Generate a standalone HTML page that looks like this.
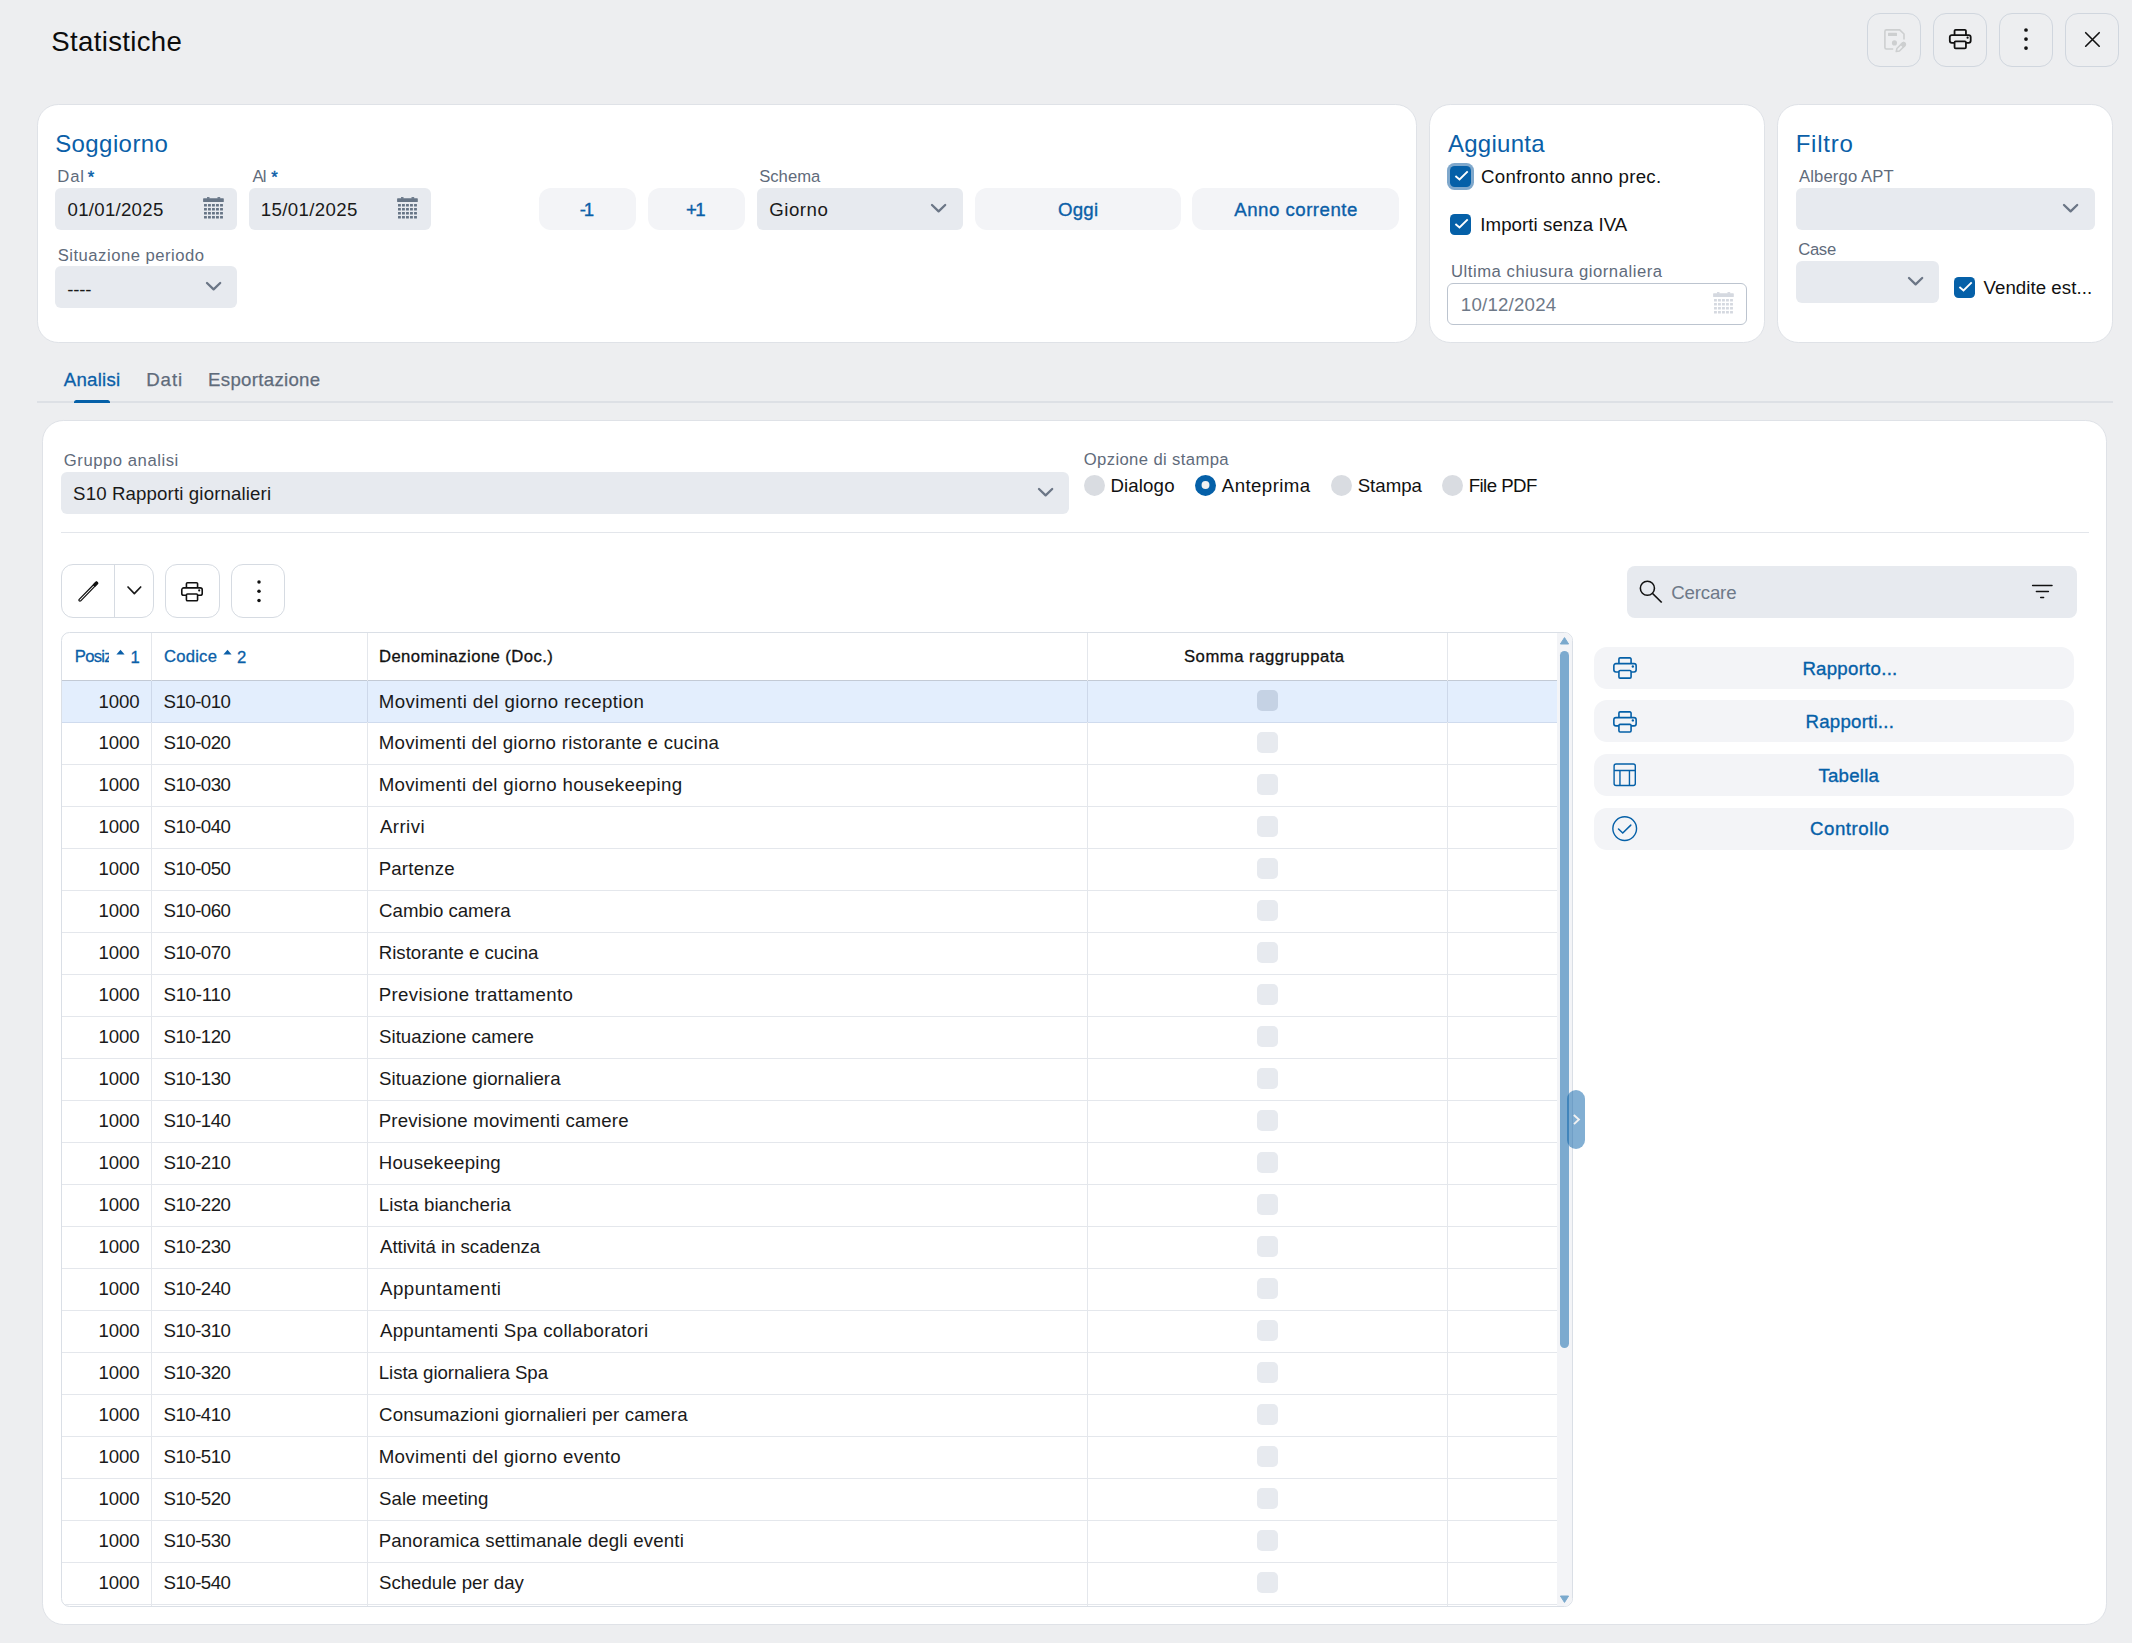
<!DOCTYPE html>
<html lang="it"><head><meta charset="utf-8"><title>Statistiche</title>
<style>
html,body{margin:0;padding:0;}
body{width:2132px;height:1643px;overflow:hidden;position:relative;background:#edeef0;font-family:"Liberation Sans", sans-serif;}
.a{position:absolute;display:block;}
.t{position:absolute;display:block;white-space:nowrap;line-height:1;font-family:"Liberation Sans", sans-serif;}
</style></head><body>
<div class="a" style="left:1867px;top:13px;width:54px;height:54px;border:1px solid #d0d6de;border-radius:13px;box-sizing:border-box;"></div>
<div class="a" style="left:1933px;top:13px;width:54px;height:54px;border:1px solid #d0d6de;border-radius:13px;box-sizing:border-box;"></div>
<div class="a" style="left:1999px;top:13px;width:54px;height:54px;border:1px solid #d0d6de;border-radius:13px;box-sizing:border-box;"></div>
<div class="a" style="left:2065px;top:13px;width:54px;height:54px;border:1px solid #d0d6de;border-radius:13px;box-sizing:border-box;"></div>
<svg class="a" style="left:1870px;top:20px;" width="50" height="40" viewBox="0 0 50 40"><path d="M34.0 19.6 V14.0 L29.7 9.9 H16.4 a1.5 1.5 0 0 0 -1.5 1.5 V27.5 a1.5 1.5 0 0 0 1.5 1.5 H23.2" fill="none" stroke="#cdcfd0" stroke-width="1.6" stroke-linejoin="round" stroke-linecap="butt"/><rect x="18.0" y="12.8" width="9.0" height="3.2" rx="0.5" fill="#cdcfd0"/><circle cx="24.45" cy="22.9" r="2.55" fill="#cdcfd0"/><path d="M26.2 31.6 L26.9 28.5 L32.3 23.1 a1.8 1.8 0 0 1 2.55 2.55 L29.45 31.05 Z" fill="none" stroke="#cdcfd0" stroke-width="1.5" stroke-linejoin="round"/><path d="M30.9 24.5 L32.3 23.1 a1.8 1.8 0 0 1 2.55 2.55 L33.45 27.05 Z" fill="#cdcfd0" stroke="#cdcfd0" stroke-width="1.2" stroke-linejoin="round"/></svg>
<svg class="a" style="left:1949.1px;top:29.4px;overflow:visible;" width="22.5" height="20.2" viewBox="0 0 22.5 20.2"><g transform="scale(1.0000,1.0000)" fill="none" stroke="#111" stroke-width="1.8" stroke-linejoin="round" stroke-linecap="butt"><path vector-effect="non-scaling-stroke" d="M5.55 6.1 V1.9 a1.1 1.1 0 0 1 1.1 -1.1 H15.85 a1.1 1.1 0 0 1 1.1 1.1 V6.1"/><path vector-effect="non-scaling-stroke" d="M5.55 13.8 H2.8 a2 2 0 0 1 -2 -2 V8.1 a2 2 0 0 1 2 -2 H19.7 a2 2 0 0 1 2 2 V11.8 a2 2 0 0 1 -2 2 H16.95"/><rect vector-effect="non-scaling-stroke" x="5.55" y="12.4" width="11.4" height="7" rx="1.1"/></g><circle cx="18.60" cy="8.70" r="1.10" fill="#111"/></svg>
<svg class="a" style="left:2022.3px;top:26.4px;" width="8" height="26.1" viewBox="0 0 8 26.1"><circle cx="4" cy="4.0" r="1.85" fill="#111"/><circle cx="4" cy="13.100000000000001" r="1.85" fill="#111"/><circle cx="4" cy="22.1" r="1.85" fill="#111"/></svg>
<svg class="a" style="left:2083px;top:30px;" width="19" height="19" viewBox="0 0 19 19"><path d="M2.7 2.7 L16.2 16.2 M16.2 2.7 L2.7 16.2" stroke="#111" stroke-width="1.6" stroke-linecap="round"/></svg>
<div class="a" style="left:37px;top:104px;width:1380px;height:239px;background:#fff;border:1px solid #dfe2e7;border-radius:21.3px;box-sizing:border-box;"></div>
<div class="a" style="left:55px;top:188px;width:182px;height:42px;background:#e7eaef;border-radius:6px;"></div>
<div class="a" style="left:249px;top:188px;width:182px;height:42px;background:#e7eaef;border-radius:6px;"></div>
<svg class="a" style="left:203px;top:197px;" width="21" height="22" viewBox="0 0 21 22"><g fill="#677586" opacity="1.0"><rect x="0.1" y="1.3" width="20.7" height="3.8" rx="0.7"/><rect x="4.0" y="0.1" width="2.5" height="1.6"/><rect x="14.5" y="0.1" width="2.7" height="1.6"/><rect x="1.0" y="7.0" width="2.9" height="2.5" rx="0.3"/><rect x="5.0" y="7.0" width="2.9" height="2.5" rx="0.3"/><rect x="9.0" y="7.0" width="2.9" height="2.5" rx="0.3"/><rect x="13.0" y="7.0" width="2.9" height="2.5" rx="0.3"/><rect x="17.05" y="7.0" width="2.9" height="2.5" rx="0.3"/><rect x="1.0" y="11.0" width="2.9" height="2.5" rx="0.3"/><rect x="5.0" y="11.0" width="2.9" height="2.5" rx="0.3"/><rect x="9.0" y="11.0" width="2.9" height="2.5" rx="0.3"/><rect x="13.0" y="11.0" width="2.9" height="2.5" rx="0.3"/><rect x="17.05" y="11.0" width="2.9" height="2.5" rx="0.3"/><rect x="1.0" y="15.0" width="2.9" height="2.5" rx="0.3"/><rect x="5.0" y="15.0" width="2.9" height="2.5" rx="0.3"/><rect x="9.0" y="15.0" width="2.9" height="2.5" rx="0.3"/><rect x="13.0" y="15.0" width="2.9" height="2.5" rx="0.3"/><rect x="17.05" y="15.0" width="2.9" height="2.5" rx="0.3"/><rect x="1.0" y="19.0" width="2.9" height="2.5" rx="0.3"/><rect x="5.0" y="19.0" width="2.9" height="2.5" rx="0.3"/><rect x="9.0" y="19.0" width="2.9" height="2.5" rx="0.3"/><rect x="13.0" y="19.0" width="2.9" height="2.5" rx="0.3"/><rect x="17.05" y="19.0" width="2.9" height="2.5" rx="0.3"/></g></svg>
<svg class="a" style="left:396.5px;top:197px;" width="21" height="22" viewBox="0 0 21 22"><g fill="#677586" opacity="1.0"><rect x="0.1" y="1.3" width="20.7" height="3.8" rx="0.7"/><rect x="4.0" y="0.1" width="2.5" height="1.6"/><rect x="14.5" y="0.1" width="2.7" height="1.6"/><rect x="1.0" y="7.0" width="2.9" height="2.5" rx="0.3"/><rect x="5.0" y="7.0" width="2.9" height="2.5" rx="0.3"/><rect x="9.0" y="7.0" width="2.9" height="2.5" rx="0.3"/><rect x="13.0" y="7.0" width="2.9" height="2.5" rx="0.3"/><rect x="17.05" y="7.0" width="2.9" height="2.5" rx="0.3"/><rect x="1.0" y="11.0" width="2.9" height="2.5" rx="0.3"/><rect x="5.0" y="11.0" width="2.9" height="2.5" rx="0.3"/><rect x="9.0" y="11.0" width="2.9" height="2.5" rx="0.3"/><rect x="13.0" y="11.0" width="2.9" height="2.5" rx="0.3"/><rect x="17.05" y="11.0" width="2.9" height="2.5" rx="0.3"/><rect x="1.0" y="15.0" width="2.9" height="2.5" rx="0.3"/><rect x="5.0" y="15.0" width="2.9" height="2.5" rx="0.3"/><rect x="9.0" y="15.0" width="2.9" height="2.5" rx="0.3"/><rect x="13.0" y="15.0" width="2.9" height="2.5" rx="0.3"/><rect x="17.05" y="15.0" width="2.9" height="2.5" rx="0.3"/><rect x="1.0" y="19.0" width="2.9" height="2.5" rx="0.3"/><rect x="5.0" y="19.0" width="2.9" height="2.5" rx="0.3"/><rect x="9.0" y="19.0" width="2.9" height="2.5" rx="0.3"/><rect x="13.0" y="19.0" width="2.9" height="2.5" rx="0.3"/><rect x="17.05" y="19.0" width="2.9" height="2.5" rx="0.3"/></g></svg>
<div class="a" style="left:55px;top:266px;width:182px;height:42px;background:#e7eaef;border-radius:6px;"></div>
<svg class="a" style="left:204.70000000000002px;top:281.1px;" width="17.2" height="10.4" viewBox="0 0 17.2 10.4"><path d="M2 2 L8.6 8.4 L15.2 2" fill="none" stroke="#6b7686" stroke-width="2.3" stroke-linecap="round" stroke-linejoin="round"/></svg>
<div class="a" style="left:539px;top:188px;width:97px;height:42px;background:#f3f4f7;border-radius:12px;"></div>
<div class="a" style="left:648px;top:188px;width:97px;height:42px;background:#f3f4f7;border-radius:12px;"></div>
<div class="a" style="left:757px;top:188px;width:206px;height:42px;background:#e7eaef;border-radius:6px;"></div>
<svg class="a" style="left:930.4px;top:203.10000000000002px;" width="17.2" height="10.4" viewBox="0 0 17.2 10.4"><path d="M2 2 L8.6 8.4 L15.2 2" fill="none" stroke="#6b7686" stroke-width="2.3" stroke-linecap="round" stroke-linejoin="round"/></svg>
<div class="a" style="left:975px;top:188px;width:206px;height:42px;background:#f3f4f7;border-radius:12px;"></div>
<div class="a" style="left:1192px;top:188px;width:207px;height:42px;background:#f3f4f7;border-radius:12px;"></div>
<div class="a" style="left:1429px;top:104px;width:336px;height:239px;background:#fff;border:1px solid #dfe2e7;border-radius:21.3px;box-sizing:border-box;"></div>
<div class="a" style="left:1447px;top:163px;width:27px;height:27px;background:#7fa8cc;border-radius:7.5px;"></div>
<div class="a" style="left:1450px;top:166px;width:21px;height:21px;background:#0560a8;border-radius:4.6px;"></div>
<svg class="a" style="left:1450px;top:166px;" width="21" height="21" viewBox="0 0 21 21"><path d="M5.4 10.0 L9.5 13.4 L17.7 5.4" fill="none" stroke="#fff" stroke-width="1.9" stroke-linecap="butt" stroke-linejoin="miter"/></svg>
<div class="a" style="left:1450px;top:214px;width:21px;height:21px;background:#0560a8;border-radius:4.6px;"></div>
<svg class="a" style="left:1450px;top:214px;" width="21" height="21" viewBox="0 0 21 21"><path d="M5.4 10.0 L9.5 13.4 L17.7 5.4" fill="none" stroke="#fff" stroke-width="1.9" stroke-linecap="butt" stroke-linejoin="miter"/></svg>
<div class="a" style="left:1447px;top:283px;width:300px;height:42px;background:#fff;border:1px solid #bcc4cf;border-radius:6px;box-sizing:border-box;"></div>
<svg class="a" style="left:1713px;top:292px;" width="21" height="22" viewBox="0 0 21 22"><g fill="#d5d9e0" opacity="1.0"><rect x="0.1" y="1.3" width="20.7" height="3.8" rx="0.7"/><rect x="4.0" y="0.1" width="2.5" height="1.6"/><rect x="14.5" y="0.1" width="2.7" height="1.6"/><rect x="1.0" y="7.0" width="2.9" height="2.5" rx="0.3"/><rect x="5.0" y="7.0" width="2.9" height="2.5" rx="0.3"/><rect x="9.0" y="7.0" width="2.9" height="2.5" rx="0.3"/><rect x="13.0" y="7.0" width="2.9" height="2.5" rx="0.3"/><rect x="17.05" y="7.0" width="2.9" height="2.5" rx="0.3"/><rect x="1.0" y="11.0" width="2.9" height="2.5" rx="0.3"/><rect x="5.0" y="11.0" width="2.9" height="2.5" rx="0.3"/><rect x="9.0" y="11.0" width="2.9" height="2.5" rx="0.3"/><rect x="13.0" y="11.0" width="2.9" height="2.5" rx="0.3"/><rect x="17.05" y="11.0" width="2.9" height="2.5" rx="0.3"/><rect x="1.0" y="15.0" width="2.9" height="2.5" rx="0.3"/><rect x="5.0" y="15.0" width="2.9" height="2.5" rx="0.3"/><rect x="9.0" y="15.0" width="2.9" height="2.5" rx="0.3"/><rect x="13.0" y="15.0" width="2.9" height="2.5" rx="0.3"/><rect x="17.05" y="15.0" width="2.9" height="2.5" rx="0.3"/><rect x="1.0" y="19.0" width="2.9" height="2.5" rx="0.3"/><rect x="5.0" y="19.0" width="2.9" height="2.5" rx="0.3"/><rect x="9.0" y="19.0" width="2.9" height="2.5" rx="0.3"/><rect x="13.0" y="19.0" width="2.9" height="2.5" rx="0.3"/><rect x="17.05" y="19.0" width="2.9" height="2.5" rx="0.3"/></g></svg>
<div class="a" style="left:1777px;top:104px;width:336px;height:239px;background:#fff;border:1px solid #dfe2e7;border-radius:21.3px;box-sizing:border-box;"></div>
<div class="a" style="left:1796px;top:188px;width:299px;height:42px;background:#e7eaef;border-radius:6px;"></div>
<svg class="a" style="left:2062.4px;top:203.10000000000002px;" width="17.2" height="10.4" viewBox="0 0 17.2 10.4"><path d="M2 2 L8.6 8.4 L15.2 2" fill="none" stroke="#6b7686" stroke-width="2.3" stroke-linecap="round" stroke-linejoin="round"/></svg>
<div class="a" style="left:1796px;top:261px;width:143px;height:42px;background:#e7eaef;border-radius:6px;"></div>
<svg class="a" style="left:1906.9px;top:275.8px;" width="17.2" height="10.4" viewBox="0 0 17.2 10.4"><path d="M2 2 L8.6 8.4 L15.2 2" fill="none" stroke="#6b7686" stroke-width="2.3" stroke-linecap="round" stroke-linejoin="round"/></svg>
<div class="a" style="left:1954px;top:277px;width:21px;height:21px;background:#0560a8;border-radius:4.6px;"></div>
<svg class="a" style="left:1954px;top:277px;" width="21" height="21" viewBox="0 0 21 21"><path d="M5.4 10.0 L9.5 13.4 L17.7 5.4" fill="none" stroke="#fff" stroke-width="1.9" stroke-linecap="butt" stroke-linejoin="miter"/></svg>
<div class="a" style="left:37px;top:401px;width:2076px;height:2px;background:#dde0e5;"></div>
<div class="a" style="left:74px;top:400px;width:36px;height:3px;background:#0560a8;border-radius:2.5px 2.5px 0 0;"></div>
<div class="a" style="left:42px;top:420px;width:2065px;height:1205px;background:#fff;border:1px solid #dfe2e7;border-radius:21.3px;box-sizing:border-box;"></div>
<div class="a" style="left:61px;top:472px;width:1008px;height:42px;background:#e7eaef;border-radius:6px;"></div>
<svg class="a" style="left:1036.7px;top:487.3px;" width="17.2" height="10.4" viewBox="0 0 17.2 10.4"><path d="M2 2 L8.6 8.4 L15.2 2" fill="none" stroke="#6b7686" stroke-width="2.3" stroke-linecap="round" stroke-linejoin="round"/></svg>
<svg class="a" style="left:1083.0px;top:474px;" width="23" height="23" viewBox="0 0 23 23"><circle cx="11.5" cy="11.45" r="10.5" fill="#d9dce1"/></svg>
<svg class="a" style="left:1329.9px;top:474px;" width="23" height="23" viewBox="0 0 23 23"><circle cx="11.5" cy="11.45" r="10.5" fill="#d9dce1"/></svg>
<svg class="a" style="left:1440.9px;top:474px;" width="23" height="23" viewBox="0 0 23 23"><circle cx="11.5" cy="11.45" r="10.5" fill="#d9dce1"/></svg>
<svg class="a" style="left:1194.1px;top:474px;" width="23" height="23" viewBox="0 0 23 23"><circle cx="11.5" cy="11.45" r="10.5" fill="#0560a8"/><circle cx="11.5" cy="11.05" r="3.95" fill="#f1f1f1"/></svg>
<div class="a" style="left:61px;top:532px;width:2028px;height:1.4px;background:#e3e6eb;"></div>
<div class="a" style="left:61px;top:564px;width:93px;height:54px;background:#fff;border:1px solid #d6dbe2;border-radius:12px;box-sizing:border-box;"></div>
<div class="a" style="left:114px;top:565px;width:1px;height:52px;background:#d6dbe2;"></div>
<div class="a" style="left:165px;top:564px;width:55px;height:54px;background:#fff;border:1px solid #d6dbe2;border-radius:12px;box-sizing:border-box;"></div>
<div class="a" style="left:231px;top:564px;width:54px;height:54px;background:#fff;border:1px solid #d6dbe2;border-radius:12px;box-sizing:border-box;"></div>
<svg class="a" style="left:64px;top:570px;" width="50" height="40" viewBox="0 0 50 40"><g transform="translate(16.0,30.05) rotate(-45.7)"><rect x="-1.1" y="-1.05" width="25.7" height="2.1" rx="1.05" fill="none" stroke="#111" stroke-width="1.25"/><rect x="19.6" y="-1.65" width="5.6" height="3.3" rx="0.9" fill="#111"/></g></svg>
<svg class="a" style="left:125.65px;top:584.9499999999999px;" width="16.7" height="10.7" viewBox="0 0 16.7 10.7"><path d="M2 2 L8.35 8.7 L14.7 2" fill="none" stroke="#1a1a1a" stroke-width="1.7" stroke-linecap="round" stroke-linejoin="round"/></svg>
<svg class="a" style="left:181.3px;top:581.8px;overflow:visible;" width="22" height="19.5" viewBox="0 0 22 19.5"><g transform="scale(0.9778,0.9653)" fill="none" stroke="#111" stroke-width="1.6" stroke-linejoin="round" stroke-linecap="butt"><path vector-effect="non-scaling-stroke" d="M5.55 6.1 V1.9 a1.1 1.1 0 0 1 1.1 -1.1 H15.85 a1.1 1.1 0 0 1 1.1 1.1 V6.1"/><path vector-effect="non-scaling-stroke" d="M5.55 13.8 H2.8 a2 2 0 0 1 -2 -2 V8.1 a2 2 0 0 1 2 -2 H19.7 a2 2 0 0 1 2 2 V11.8 a2 2 0 0 1 -2 2 H16.95"/><rect vector-effect="non-scaling-stroke" x="5.55" y="12.4" width="11.4" height="7" rx="1.1"/></g><circle cx="18.19" cy="8.40" r="1.08" fill="#111"/></svg>
<svg class="a" style="left:254.5px;top:578px;" width="8" height="26.399999999999977" viewBox="0 0 8 26.399999999999977"><circle cx="4" cy="4" r="1.75" fill="#111"/><circle cx="4" cy="13.299999999999955" r="1.75" fill="#111"/><circle cx="4" cy="22.399999999999977" r="1.75" fill="#111"/></svg>
<div class="a" style="left:1627px;top:566px;width:450px;height:52px;background:#e7eaef;border-radius:8px;"></div>
<svg class="a" style="left:1630px;top:572px;" width="50" height="40" viewBox="0 0 50 40"><circle cx="17.4" cy="16.25" r="7.05" fill="none" stroke="#111" stroke-width="1.55"/><path d="M22.6 21.5 L31.7 30.5" stroke="#111" stroke-width="1.7" stroke-linecap="butt"/></svg>
<svg class="a" style="left:2020px;top:572px;" width="50" height="40" viewBox="0 0 50 40"><path d="M12.6 13.45 H32.0 M16.4 19.4 H28.4 M20.7 25.4 H23.6" stroke="#111" stroke-width="1.5" stroke-linecap="round"/></svg>
<div class="a" style="left:61px;top:632px;width:1512px;height:975px;border:1px solid #dadfe6;border-radius:8.5px;box-sizing:border-box;overflow:hidden;background:#fff;">
<div class="a" style="left:0px;top:48px;width:1495px;height:41px;background:#e3eefd;"></div>
<div class="a" style="left:0px;top:47px;width:1495px;height:1.3px;background:#c3cad5;"></div>
<div class="a" style="left:0px;top:89px;width:1495px;height:1px;background:#cfdbee;"></div>
<div class="a" style="left:0px;top:131px;width:1495px;height:1.2px;background:#e4e7ec;"></div>
<div class="a" style="left:0px;top:173px;width:1495px;height:1.2px;background:#e4e7ec;"></div>
<div class="a" style="left:0px;top:215px;width:1495px;height:1.2px;background:#e4e7ec;"></div>
<div class="a" style="left:0px;top:257px;width:1495px;height:1.2px;background:#e4e7ec;"></div>
<div class="a" style="left:0px;top:299px;width:1495px;height:1.2px;background:#e4e7ec;"></div>
<div class="a" style="left:0px;top:341px;width:1495px;height:1.2px;background:#e4e7ec;"></div>
<div class="a" style="left:0px;top:383px;width:1495px;height:1.2px;background:#e4e7ec;"></div>
<div class="a" style="left:0px;top:425px;width:1495px;height:1.2px;background:#e4e7ec;"></div>
<div class="a" style="left:0px;top:467px;width:1495px;height:1.2px;background:#e4e7ec;"></div>
<div class="a" style="left:0px;top:509px;width:1495px;height:1.2px;background:#e4e7ec;"></div>
<div class="a" style="left:0px;top:551px;width:1495px;height:1.2px;background:#e4e7ec;"></div>
<div class="a" style="left:0px;top:593px;width:1495px;height:1.2px;background:#e4e7ec;"></div>
<div class="a" style="left:0px;top:635px;width:1495px;height:1.2px;background:#e4e7ec;"></div>
<div class="a" style="left:0px;top:677px;width:1495px;height:1.2px;background:#e4e7ec;"></div>
<div class="a" style="left:0px;top:719px;width:1495px;height:1.2px;background:#e4e7ec;"></div>
<div class="a" style="left:0px;top:761px;width:1495px;height:1.2px;background:#e4e7ec;"></div>
<div class="a" style="left:0px;top:803px;width:1495px;height:1.2px;background:#e4e7ec;"></div>
<div class="a" style="left:0px;top:845px;width:1495px;height:1.2px;background:#e4e7ec;"></div>
<div class="a" style="left:0px;top:887px;width:1495px;height:1.2px;background:#e4e7ec;"></div>
<div class="a" style="left:0px;top:929px;width:1495px;height:1.2px;background:#e4e7ec;"></div>
<div class="a" style="left:0px;top:971px;width:1495px;height:1.2px;background:#e4e7ec;"></div>
<div class="a" style="left:89px;top:0px;width:1.2px;height:973px;background:#e4e7ec;"></div>
<div class="a" style="left:89px;top:48px;width:1.2px;height:41px;background:#cdd8ea;"></div>
<div class="a" style="left:305px;top:0px;width:1.2px;height:973px;background:#e4e7ec;"></div>
<div class="a" style="left:305px;top:48px;width:1.2px;height:41px;background:#cdd8ea;"></div>
<div class="a" style="left:1025px;top:0px;width:1.2px;height:973px;background:#e4e7ec;"></div>
<div class="a" style="left:1025px;top:48px;width:1.2px;height:41px;background:#cdd8ea;"></div>
<div class="a" style="left:1385px;top:0px;width:1.2px;height:973px;background:#e4e7ec;"></div>
<div class="a" style="left:1385px;top:48px;width:1.2px;height:41px;background:#cdd8ea;"></div>
<div class="a" style="left:1195px;top:57.0px;width:21px;height:21px;border-radius:5px;background:#c5d2e4;"></div>
<div class="a" style="left:1195px;top:99.0px;width:21px;height:21px;border-radius:5px;background:#e7eaef;"></div>
<div class="a" style="left:1195px;top:141.0px;width:21px;height:21px;border-radius:5px;background:#e7eaef;"></div>
<div class="a" style="left:1195px;top:183.0px;width:21px;height:21px;border-radius:5px;background:#e7eaef;"></div>
<div class="a" style="left:1195px;top:225.0px;width:21px;height:21px;border-radius:5px;background:#e7eaef;"></div>
<div class="a" style="left:1195px;top:267.0px;width:21px;height:21px;border-radius:5px;background:#e7eaef;"></div>
<div class="a" style="left:1195px;top:309.0px;width:21px;height:21px;border-radius:5px;background:#e7eaef;"></div>
<div class="a" style="left:1195px;top:351.0px;width:21px;height:21px;border-radius:5px;background:#e7eaef;"></div>
<div class="a" style="left:1195px;top:393.0px;width:21px;height:21px;border-radius:5px;background:#e7eaef;"></div>
<div class="a" style="left:1195px;top:435.0px;width:21px;height:21px;border-radius:5px;background:#e7eaef;"></div>
<div class="a" style="left:1195px;top:477.0px;width:21px;height:21px;border-radius:5px;background:#e7eaef;"></div>
<div class="a" style="left:1195px;top:519.0px;width:21px;height:21px;border-radius:5px;background:#e7eaef;"></div>
<div class="a" style="left:1195px;top:561.0px;width:21px;height:21px;border-radius:5px;background:#e7eaef;"></div>
<div class="a" style="left:1195px;top:603.0px;width:21px;height:21px;border-radius:5px;background:#e7eaef;"></div>
<div class="a" style="left:1195px;top:645.0px;width:21px;height:21px;border-radius:5px;background:#e7eaef;"></div>
<div class="a" style="left:1195px;top:687.0px;width:21px;height:21px;border-radius:5px;background:#e7eaef;"></div>
<div class="a" style="left:1195px;top:729.0px;width:21px;height:21px;border-radius:5px;background:#e7eaef;"></div>
<div class="a" style="left:1195px;top:771.0px;width:21px;height:21px;border-radius:5px;background:#e7eaef;"></div>
<div class="a" style="left:1195px;top:813.0px;width:21px;height:21px;border-radius:5px;background:#e7eaef;"></div>
<div class="a" style="left:1195px;top:855.0px;width:21px;height:21px;border-radius:5px;background:#e7eaef;"></div>
<div class="a" style="left:1195px;top:897.0px;width:21px;height:21px;border-radius:5px;background:#e7eaef;"></div>
<div class="a" style="left:1195px;top:939.0px;width:21px;height:21px;border-radius:5px;background:#e7eaef;"></div>
<div class="a" style="left:1495px;top:0px;width:15px;height:973px;background:#f3f4f7;"></div>
<div class="a" style="left:1498px;top:18px;width:9px;height:697px;border-radius:4.5px;background:rgba(5,96,168,0.5);"></div>
<svg class="a" style="left:1497px;top:3px" width="11" height="10" viewBox="0 0 11 10"><path d="M5.5 1.6 L9.6 8 H1.4 z" fill="#7aa9cd" stroke="#7aa9cd" stroke-width="1" stroke-linejoin="round"/></svg>
<svg class="a" style="left:1496.5px;top:960.5px" width="11" height="10" viewBox="0 0 11 10"><path d="M5.5 8.4 L9.6 2 H1.4 z" fill="#7aa9cd" stroke="#7aa9cd" stroke-width="1" stroke-linejoin="round"/></svg>
</div>
<svg class="a" style="left:116px;top:649.3px;" width="9" height="6" viewBox="0 0 9 6"><path d="M4.5 0.8 L8.6 5.6 H0.4 z" fill="#0b5fa8"/></svg>
<svg class="a" style="left:222.5px;top:649.3px;" width="9" height="6" viewBox="0 0 9 6"><path d="M4.5 0.8 L8.6 5.6 H0.4 z" fill="#0b5fa8"/></svg>
<div class="a" style="left:1567px;top:1090px;width:18px;height:59px;background:rgba(5,96,168,0.5);border-radius:9px;"></div>
<svg class="a" style="left:1567px;top:1105px;" width="20" height="30" viewBox="0 0 20 30"><path d="M6.8 10.0 L11.9 14.5 L7.0 19.1" fill="none" stroke="#f2f2f2" stroke-width="1.9" stroke-linecap="butt" stroke-linejoin="miter"/></svg>
<div class="a" style="left:1594px;top:647px;width:480px;height:42px;background:#f3f4f7;border-radius:13px;"></div>
<div class="a" style="left:1594px;top:700px;width:480px;height:42px;background:#f3f4f7;border-radius:13px;"></div>
<div class="a" style="left:1594px;top:754px;width:480px;height:42px;background:#f3f4f7;border-radius:13px;"></div>
<div class="a" style="left:1594px;top:808px;width:480px;height:42px;background:#f3f4f7;border-radius:13px;"></div>
<svg class="a" style="left:1613px;top:657px;overflow:visible;" width="24" height="22" viewBox="0 0 24 22"><g transform="scale(1.0667,1.0891)" fill="none" stroke="#0560a8" stroke-width="1.6" stroke-linejoin="round" stroke-linecap="butt"><path vector-effect="non-scaling-stroke" d="M5.55 6.1 V1.9 a1.1 1.1 0 0 1 1.1 -1.1 H15.85 a1.1 1.1 0 0 1 1.1 1.1 V6.1"/><path vector-effect="non-scaling-stroke" d="M5.55 13.8 H2.8 a2 2 0 0 1 -2 -2 V8.1 a2 2 0 0 1 2 -2 H19.7 a2 2 0 0 1 2 2 V11.8 a2 2 0 0 1 -2 2 H16.95"/><rect vector-effect="non-scaling-stroke" x="5.55" y="12.4" width="11.4" height="7" rx="1.1"/></g><circle cx="19.84" cy="9.48" r="1.17" fill="#0560a8"/></svg>
<svg class="a" style="left:1613px;top:711px;overflow:visible;" width="24" height="21.8" viewBox="0 0 24 21.8"><g transform="scale(1.0667,1.0792)" fill="none" stroke="#0560a8" stroke-width="1.6" stroke-linejoin="round" stroke-linecap="butt"><path vector-effect="non-scaling-stroke" d="M5.55 6.1 V1.9 a1.1 1.1 0 0 1 1.1 -1.1 H15.85 a1.1 1.1 0 0 1 1.1 1.1 V6.1"/><path vector-effect="non-scaling-stroke" d="M5.55 13.8 H2.8 a2 2 0 0 1 -2 -2 V8.1 a2 2 0 0 1 2 -2 H19.7 a2 2 0 0 1 2 2 V11.8 a2 2 0 0 1 -2 2 H16.95"/><rect vector-effect="non-scaling-stroke" x="5.55" y="12.4" width="11.4" height="7" rx="1.1"/></g><circle cx="19.84" cy="9.39" r="1.17" fill="#0560a8"/></svg>
<svg class="a" style="left:1600px;top:755px;" width="50" height="40" viewBox="0 0 50 40"><g fill="none" stroke="#0560a8" stroke-width="1.4" stroke-linejoin="round"><rect x="14.1" y="9.0" width="21.2" height="21.5" rx="2"/><path d="M14.1 15.5 H35.3 M19.95 15.5 V30.5 M29.45 15.5 V30.5"/></g></svg>
<svg class="a" style="left:1600px;top:808px;" width="50" height="40" viewBox="0 0 50 40"><circle cx="24.7" cy="20.6" r="11.85" fill="none" stroke="#0560a8" stroke-width="1.4"/><path d="M18.5 21.05 L22.75 25.05 L30.8 17.15" fill="none" stroke="#0560a8" stroke-width="1.5" stroke-linecap="round" stroke-linejoin="miter"/></svg>
<span class="t" style="left:51.31px;top:28px;font-size:27.6px;color:#0c0c0c;letter-spacing:0.329px;">Statistiche</span>
<span class="t" style="left:55.17px;top:132px;font-size:24.0px;color:#0b5fa8;letter-spacing:0.417px;">Soggiorno</span>
<span class="t" style="left:57.28px;top:169px;font-size:16.67px;color:#5f6b7b;letter-spacing:0.868px;">Dal</span>
<span class="t" style="left:87.81px;top:170px;font-size:16.67px;color:#0b5fa8;-webkit-text-stroke:0.4px #0b5fa8;">*</span>
<span class="t" style="left:252.50px;top:169px;font-size:16.67px;color:#5f6b7b;letter-spacing:-0.810px;">Al</span>
<span class="t" style="left:271.33px;top:170px;font-size:16.67px;color:#0b5fa8;-webkit-text-stroke:0.4px #0b5fa8;">*</span>
<span class="t" style="left:67.50px;top:201px;font-size:18.67px;color:#1a1a1a;letter-spacing:0.268px;">01/01/2025</span>
<span class="t" style="left:260.83px;top:201px;font-size:18.67px;color:#1a1a1a;letter-spacing:0.343px;">15/01/2025</span>
<span class="t" style="left:57.63px;top:248px;font-size:16.67px;color:#5f6b7b;letter-spacing:0.501px;">Situazione periodo</span>
<span class="t" style="left:67.26px;top:281px;font-size:18.67px;color:#1a1a1a;letter-spacing:-0.186px;">----</span>
<span class="t" style="left:579.69px;top:201px;font-size:18.67px;color:#0b5fa8;letter-spacing:-2.088px;-webkit-text-stroke:0.35px #0b5fa8;">-1</span>
<span class="t" style="left:686.08px;top:201px;font-size:18.67px;color:#0b5fa8;letter-spacing:-1.771px;-webkit-text-stroke:0.35px #0b5fa8;">+1</span>
<span class="t" style="left:759.14px;top:169px;font-size:16.67px;color:#5f6b7b;letter-spacing:0.023px;">Schema</span>
<span class="t" style="left:769.18px;top:201px;font-size:18.67px;color:#1a1a1a;letter-spacing:0.527px;">Giorno</span>
<span class="t" style="left:1058.06px;top:201px;font-size:18.67px;color:#0b5fa8;letter-spacing:0.191px;-webkit-text-stroke:0.35px #0b5fa8;">Oggi</span>
<span class="t" style="left:1234.24px;top:201px;font-size:18.67px;color:#0b5fa8;letter-spacing:0.494px;-webkit-text-stroke:0.35px #0b5fa8;">Anno corrente</span>
<span class="t" style="left:1447.96px;top:132px;font-size:24.0px;color:#0b5fa8;letter-spacing:0.275px;">Aggiunta</span>
<span class="t" style="left:1481.08px;top:168px;font-size:18.67px;color:#111;letter-spacing:0.249px;">Confronto anno prec.</span>
<span class="t" style="left:1480.29px;top:216px;font-size:18.67px;color:#111;letter-spacing:0.073px;">Importi senza IVA</span>
<span class="t" style="left:1450.96px;top:264px;font-size:16.67px;color:#5f6b7b;letter-spacing:0.536px;">Ultima chiusura giornaliera</span>
<span class="t" style="left:1460.81px;top:296px;font-size:18.67px;color:#6e7988;letter-spacing:0.215px;">10/12/2024</span>
<span class="t" style="left:1795.70px;top:132px;font-size:24.0px;color:#0b5fa8;letter-spacing:0.773px;">Filtro</span>
<span class="t" style="left:1799.04px;top:169px;font-size:16.67px;color:#5f6b7b;letter-spacing:0.117px;">Albergo APT</span>
<span class="t" style="left:1798.20px;top:242px;font-size:16.67px;color:#5f6b7b;letter-spacing:-0.304px;">Case</span>
<span class="t" style="left:1983.50px;top:279px;font-size:18.67px;color:#111;letter-spacing:0.054px;">Vendite est...</span>
<span class="t" style="left:63.76px;top:371px;font-size:18.67px;color:#0b5fa8;letter-spacing:0.252px;-webkit-text-stroke:0.3px #0b5fa8;">Analisi</span>
<span class="t" style="left:146.19px;top:371px;font-size:18.67px;color:#5f6b7b;letter-spacing:0.933px;-webkit-text-stroke:0.25px #5f6b7b;">Dati</span>
<span class="t" style="left:208.04px;top:371px;font-size:18.67px;color:#5f6b7b;letter-spacing:0.293px;-webkit-text-stroke:0.25px #5f6b7b;">Esportazione</span>
<span class="t" style="left:63.81px;top:453px;font-size:16.67px;color:#5f6b7b;letter-spacing:0.541px;">Gruppo analisi</span>
<span class="t" style="left:73.10px;top:485px;font-size:18.67px;color:#1a1a1a;letter-spacing:0.130px;">S10 Rapporti giornalieri</span>
<span class="t" style="left:1083.72px;top:452px;font-size:16.67px;color:#5f6b7b;letter-spacing:0.376px;">Opzione di stampa</span>
<span class="t" style="left:1110.42px;top:477px;font-size:18.67px;color:#111;letter-spacing:0.140px;">Dialogo</span>
<span class="t" style="left:1221.87px;top:477px;font-size:18.67px;color:#111;letter-spacing:0.406px;">Anteprima</span>
<span class="t" style="left:1357.63px;top:477px;font-size:18.67px;color:#111;">Stampa</span>
<span class="t" style="left:1468.69px;top:477px;font-size:18.67px;color:#111;letter-spacing:-0.558px;">File PDF</span>
<span class="t" style="left:1671.16px;top:584px;font-size:18.67px;color:#6e7988;letter-spacing:-0.162px;">Cercare</span>
<span class="t" style="left:74.80px;top:649px;font-size:16.67px;color:#0b5fa8;letter-spacing:-0.750px;-webkit-text-stroke:0.3px #0b5fa8;width:34px;overflow:hidden;">Posizione</span>
<span class="t" style="left:130.43px;top:650px;font-size:16.67px;color:#0b5fa8;-webkit-text-stroke:0.3px #0b5fa8;">1</span>
<span class="t" style="left:163.88px;top:649px;font-size:16.67px;color:#0b5fa8;letter-spacing:0.240px;-webkit-text-stroke:0.3px #0b5fa8;">Codice</span>
<span class="t" style="left:236.93px;top:650px;font-size:16.67px;color:#0b5fa8;-webkit-text-stroke:0.3px #0b5fa8;">2</span>
<span class="t" style="left:378.93px;top:649px;font-size:16.67px;color:#111;letter-spacing:0.431px;-webkit-text-stroke:0.3px #111;">Denominazione (Doc.)</span>
<span class="t" style="left:1183.99px;top:649px;font-size:16.67px;color:#111;letter-spacing:0.519px;-webkit-text-stroke:0.3px #111;">Somma raggruppata</span>
<span class="t" style="left:98.54px;top:693px;font-size:18.67px;color:#1a1a1a;letter-spacing:-0.163px;">1000</span>
<span class="t" style="left:163.48px;top:693px;font-size:18.67px;color:#1a1a1a;letter-spacing:-0.510px;">S10-010</span>
<span class="t" style="left:378.74px;top:693px;font-size:18.67px;color:#1a1a1a;letter-spacing:0.384px;">Movimenti del giorno reception</span>
<span class="t" style="left:98.50px;top:734px;font-size:18.67px;color:#1a1a1a;letter-spacing:-0.167px;">1000</span>
<span class="t" style="left:163.62px;top:734px;font-size:18.67px;color:#1a1a1a;letter-spacing:-0.542px;">S10-020</span>
<span class="t" style="left:378.69px;top:734px;font-size:18.67px;color:#1a1a1a;letter-spacing:0.269px;">Movimenti del giorno ristorante e cucina</span>
<span class="t" style="left:98.50px;top:776px;font-size:18.67px;color:#1a1a1a;letter-spacing:-0.167px;">1000</span>
<span class="t" style="left:163.62px;top:776px;font-size:18.67px;color:#1a1a1a;letter-spacing:-0.542px;">S10-030</span>
<span class="t" style="left:378.69px;top:776px;font-size:18.67px;color:#1a1a1a;letter-spacing:0.307px;">Movimenti del giorno housekeeping</span>
<span class="t" style="left:98.50px;top:818px;font-size:18.67px;color:#1a1a1a;letter-spacing:-0.167px;">1000</span>
<span class="t" style="left:163.62px;top:818px;font-size:18.67px;color:#1a1a1a;letter-spacing:-0.542px;">S10-040</span>
<span class="t" style="left:379.97px;top:818px;font-size:18.67px;color:#1a1a1a;letter-spacing:0.424px;">Arrivi</span>
<span class="t" style="left:98.50px;top:860px;font-size:18.67px;color:#1a1a1a;letter-spacing:-0.167px;">1000</span>
<span class="t" style="left:163.62px;top:860px;font-size:18.67px;color:#1a1a1a;letter-spacing:-0.542px;">S10-050</span>
<span class="t" style="left:378.69px;top:860px;font-size:18.67px;color:#1a1a1a;letter-spacing:0.184px;">Partenze</span>
<span class="t" style="left:98.50px;top:902px;font-size:18.67px;color:#1a1a1a;letter-spacing:-0.167px;">1000</span>
<span class="t" style="left:163.62px;top:902px;font-size:18.67px;color:#1a1a1a;letter-spacing:-0.542px;">S10-060</span>
<span class="t" style="left:379.08px;top:902px;font-size:18.67px;color:#1a1a1a;letter-spacing:-0.017px;">Cambio camera</span>
<span class="t" style="left:98.50px;top:944px;font-size:18.67px;color:#1a1a1a;letter-spacing:-0.167px;">1000</span>
<span class="t" style="left:163.62px;top:944px;font-size:18.67px;color:#1a1a1a;letter-spacing:-0.542px;">S10-070</span>
<span class="t" style="left:378.69px;top:944px;font-size:18.67px;color:#1a1a1a;letter-spacing:0.004px;">Ristorante e cucina</span>
<span class="t" style="left:98.50px;top:986px;font-size:18.67px;color:#1a1a1a;letter-spacing:-0.167px;">1000</span>
<span class="t" style="left:163.62px;top:986px;font-size:18.67px;color:#1a1a1a;letter-spacing:-0.311px;">S10-110</span>
<span class="t" style="left:378.69px;top:986px;font-size:18.67px;color:#1a1a1a;letter-spacing:0.360px;">Previsione trattamento</span>
<span class="t" style="left:98.50px;top:1028px;font-size:18.67px;color:#1a1a1a;letter-spacing:-0.167px;">1000</span>
<span class="t" style="left:163.62px;top:1028px;font-size:18.67px;color:#1a1a1a;letter-spacing:-0.542px;">S10-120</span>
<span class="t" style="left:378.99px;top:1028px;font-size:18.67px;color:#1a1a1a;letter-spacing:0.029px;">Situazione camere</span>
<span class="t" style="left:98.50px;top:1070px;font-size:18.67px;color:#1a1a1a;letter-spacing:-0.167px;">1000</span>
<span class="t" style="left:163.62px;top:1070px;font-size:18.67px;color:#1a1a1a;letter-spacing:-0.542px;">S10-130</span>
<span class="t" style="left:378.99px;top:1070px;font-size:18.67px;color:#1a1a1a;letter-spacing:0.102px;">Situazione giornaliera</span>
<span class="t" style="left:98.50px;top:1112px;font-size:18.67px;color:#1a1a1a;letter-spacing:-0.167px;">1000</span>
<span class="t" style="left:163.62px;top:1112px;font-size:18.67px;color:#1a1a1a;letter-spacing:-0.542px;">S10-140</span>
<span class="t" style="left:378.69px;top:1112px;font-size:18.67px;color:#1a1a1a;letter-spacing:0.203px;">Previsione movimenti camere</span>
<span class="t" style="left:98.50px;top:1154px;font-size:18.67px;color:#1a1a1a;letter-spacing:-0.167px;">1000</span>
<span class="t" style="left:163.62px;top:1154px;font-size:18.67px;color:#1a1a1a;letter-spacing:-0.542px;">S10-210</span>
<span class="t" style="left:378.69px;top:1154px;font-size:18.67px;color:#1a1a1a;letter-spacing:0.245px;">Housekeeping</span>
<span class="t" style="left:98.50px;top:1196px;font-size:18.67px;color:#1a1a1a;letter-spacing:-0.167px;">1000</span>
<span class="t" style="left:163.62px;top:1196px;font-size:18.67px;color:#1a1a1a;letter-spacing:-0.542px;">S10-220</span>
<span class="t" style="left:378.69px;top:1196px;font-size:18.67px;color:#1a1a1a;letter-spacing:0.103px;">Lista biancheria</span>
<span class="t" style="left:98.50px;top:1238px;font-size:18.67px;color:#1a1a1a;letter-spacing:-0.167px;">1000</span>
<span class="t" style="left:163.62px;top:1238px;font-size:18.67px;color:#1a1a1a;letter-spacing:-0.542px;">S10-230</span>
<span class="t" style="left:379.97px;top:1238px;font-size:18.67px;color:#1a1a1a;letter-spacing:-0.026px;">Attivitá in scadenza</span>
<span class="t" style="left:98.50px;top:1280px;font-size:18.67px;color:#1a1a1a;letter-spacing:-0.167px;">1000</span>
<span class="t" style="left:163.62px;top:1280px;font-size:18.67px;color:#1a1a1a;letter-spacing:-0.542px;">S10-240</span>
<span class="t" style="left:379.97px;top:1280px;font-size:18.67px;color:#1a1a1a;letter-spacing:0.538px;">Appuntamenti</span>
<span class="t" style="left:98.50px;top:1322px;font-size:18.67px;color:#1a1a1a;letter-spacing:-0.167px;">1000</span>
<span class="t" style="left:163.62px;top:1322px;font-size:18.67px;color:#1a1a1a;letter-spacing:-0.542px;">S10-310</span>
<span class="t" style="left:379.97px;top:1322px;font-size:18.67px;color:#1a1a1a;letter-spacing:0.267px;">Appuntamenti Spa collaboratori</span>
<span class="t" style="left:98.50px;top:1364px;font-size:18.67px;color:#1a1a1a;letter-spacing:-0.167px;">1000</span>
<span class="t" style="left:163.62px;top:1364px;font-size:18.67px;color:#1a1a1a;letter-spacing:-0.542px;">S10-320</span>
<span class="t" style="left:378.69px;top:1364px;font-size:18.67px;color:#1a1a1a;letter-spacing:-0.037px;">Lista giornaliera Spa</span>
<span class="t" style="left:98.50px;top:1406px;font-size:18.67px;color:#1a1a1a;letter-spacing:-0.167px;">1000</span>
<span class="t" style="left:163.62px;top:1406px;font-size:18.67px;color:#1a1a1a;letter-spacing:-0.542px;">S10-410</span>
<span class="t" style="left:379.08px;top:1406px;font-size:18.67px;color:#1a1a1a;letter-spacing:0.137px;">Consumazioni giornalieri per camera</span>
<span class="t" style="left:98.50px;top:1448px;font-size:18.67px;color:#1a1a1a;letter-spacing:-0.167px;">1000</span>
<span class="t" style="left:163.62px;top:1448px;font-size:18.67px;color:#1a1a1a;letter-spacing:-0.542px;">S10-510</span>
<span class="t" style="left:378.69px;top:1448px;font-size:18.67px;color:#1a1a1a;letter-spacing:0.335px;">Movimenti del giorno evento</span>
<span class="t" style="left:98.50px;top:1490px;font-size:18.67px;color:#1a1a1a;letter-spacing:-0.167px;">1000</span>
<span class="t" style="left:163.62px;top:1490px;font-size:18.67px;color:#1a1a1a;letter-spacing:-0.542px;">S10-520</span>
<span class="t" style="left:378.99px;top:1490px;font-size:18.67px;color:#1a1a1a;letter-spacing:0.048px;">Sale meeting</span>
<span class="t" style="left:98.50px;top:1532px;font-size:18.67px;color:#1a1a1a;letter-spacing:-0.167px;">1000</span>
<span class="t" style="left:163.62px;top:1532px;font-size:18.67px;color:#1a1a1a;letter-spacing:-0.542px;">S10-530</span>
<span class="t" style="left:378.69px;top:1532px;font-size:18.67px;color:#1a1a1a;letter-spacing:0.159px;">Panoramica settimanale degli eventi</span>
<span class="t" style="left:98.50px;top:1574px;font-size:18.67px;color:#1a1a1a;letter-spacing:-0.167px;">1000</span>
<span class="t" style="left:163.62px;top:1574px;font-size:18.67px;color:#1a1a1a;letter-spacing:-0.542px;">S10-540</span>
<span class="t" style="left:378.99px;top:1574px;font-size:18.67px;color:#1a1a1a;letter-spacing:-0.022px;">Schedule per day</span>
<span class="t" style="left:1802.38px;top:660px;font-size:18.67px;color:#0560a8;letter-spacing:0.258px;-webkit-text-stroke:0.35px #0560a8;">Rapporto...</span>
<span class="t" style="left:1805.54px;top:713px;font-size:18.67px;color:#0560a8;letter-spacing:0.228px;-webkit-text-stroke:0.35px #0560a8;">Rapporti...</span>
<span class="t" style="left:1818.43px;top:767px;font-size:18.67px;color:#0560a8;letter-spacing:0.225px;-webkit-text-stroke:0.35px #0560a8;">Tabella</span>
<span class="t" style="left:1810.01px;top:820px;font-size:18.67px;color:#0560a8;letter-spacing:0.541px;-webkit-text-stroke:0.35px #0560a8;">Controllo</span>
</body></html>
